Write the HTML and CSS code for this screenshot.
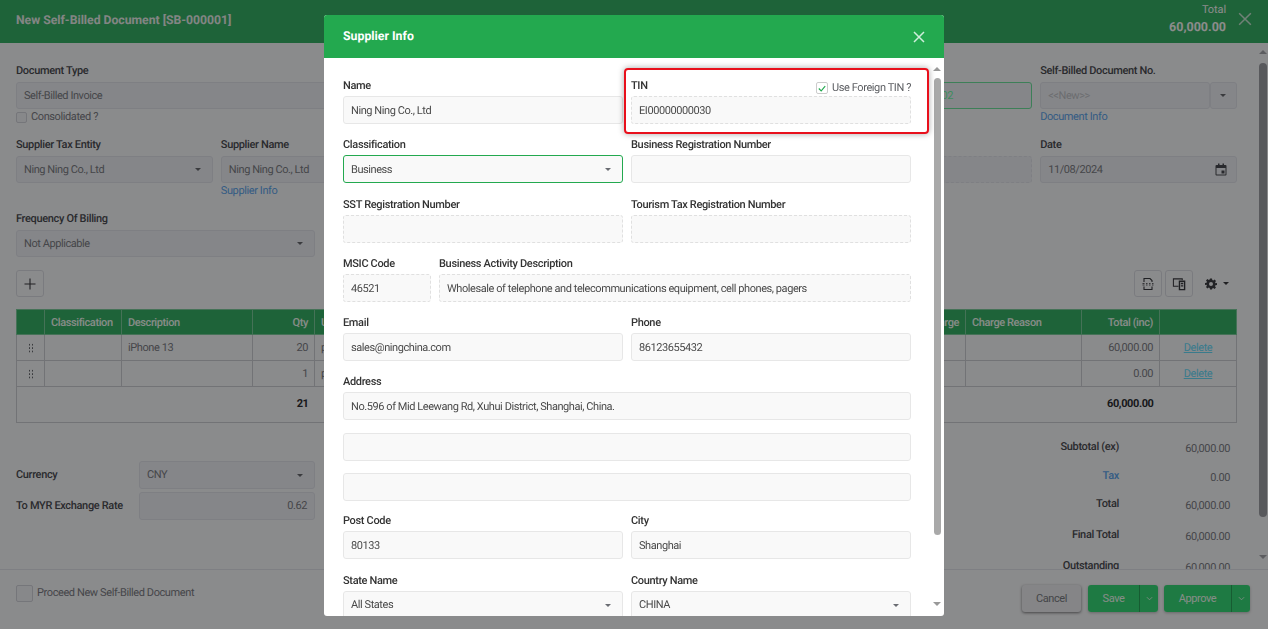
FILE: index.html
```html
<!DOCTYPE html>
<html lang="en">
<head>
<meta charset="utf-8">
<title>New Self-Billed Document</title>
<link rel="stylesheet" href="styles.css">
</head>
<body>
<div class="page">
  <header class="top">
    <h1>New Self-Billed Document [SB-000001]</h1>
    <div class="top-total"><span>Total</span><strong>60,000.00</strong></div>
    <svg class="top-x" viewBox="0 0 12 12"><path d="M1 1l10 10M11 1L1 11"/></svg>
  </header>
  <div class="middle">
    <main class="content">
      <div class="grid6">
        <div class="f s4"><label>Document Type</label><div class="inp">Self-Billed Invoice</div>
          <div class="chk-line"><i class="box"></i>Consolidated ?</div></div>
        <div class="f"><label>&nbsp;</label><div class="inp green">SB-2024-000000000002</div></div>
        <div class="f"><label>Self-Billed Document No.</label>
          <div class="combo"><div class="inp muted">&lt;&lt;New&gt;&gt;</div><div class="inp btn-c"><b class="caret"></b></div></div>
          <a class="link">Document Info</a></div>
      </div>
      <div class="grid6 r2">
        <div class="f"><label>Supplier Tax Entity</label><div class="inp sel">Ning Ning Co., Ltd<b class="caret"></b></div></div>
        <div class="f s2"><label>Supplier Name</label><div class="inp">Ning Ning Co., Ltd</div><a class="link">Supplier Info</a></div>
        <div class="f"></div>
        <div class="f"><label>&nbsp;</label><div class="inp dash"></div></div>
        <div class="f"><label>Date</label><div class="inp sel">11/08/2024
          <svg class="cal" viewBox="0 0 12 13"><path d="M1.500 2h9a1 1 0 0 1 1 1v8.500a1 1 0 0 1-1 1h-9a1 1 0 0 1-1-1V3a1 1 0 0 1 1-1zm0 3v6.500h9V5zM3 .5h1.500V2H3zm4.500 0H9V2H7.500zM6.500 7.500h3v3h-3z" fill-rule="evenodd"/></svg></div></div>
      </div>
      <div class="f freq"><label>Frequency Of Billing</label><div class="inp sel">Not Applicable<b class="caret"></b></div></div>
      <div class="tools">
        <button class="sq"><svg viewBox="0 0 12 12"><path d="M6 .5v11M.5 6h11"/></svg></button>
        <div class="tools-r">
          <button class="sq"><svg class="ic" viewBox="0 0 14 14"><path d="M3 5V1.500h6l2 2V5M3 9.500v3h8v-3" /><path class="thin" d="M1.500 6.500h2M1.500 8h2M5 6.500h1.500M5 8h1.500M8 6.500h1.500M8 8h1.500M11 6.500h1.500M11 8h1.500"/></svg></button>
          <button class="sq"><svg class="ic" viewBox="0 0 15 14"><path d="M11 3V1.500H1.500v8H7"/><path class="fill" d="M8 4h5.500v9H8zM9.500 6.500h2.500M9.500 9h2.500"/></svg></button>
          <span class="gear"><svg viewBox="0 0 24 24"><path fill-rule="evenodd" d="M10 1h4l.6 3.100 1.900.8 2.700-1.800 2.800 2.800-1.800 2.700.8 1.900L24 10v4l-3.100.6-.8 1.900 1.800 2.700-2.800 2.800-2.700-1.800-1.900.8L14 23h-4l-.6-3.100-1.900-.8-2.700 1.800L2 18.100l1.800-2.700-.8-1.900L0 14v-4l3.100-.6.8-1.900L2 4.900 4.800 2.100l2.700 1.800 1.900-.8zM12 8a4 4 0 1 0 0 8 4 4 0 0 0 0-8z"/></svg><b class="caret dark"></b></span>
        </div>
      </div>
      <table class="items">
        <colgroup><col class="c1"><col class="c2"><col class="c3"><col class="c4"><col><col class="c6"><col class="c7"><col class="c8"><col class="c9"></colgroup>
        <thead><tr><th></th><th>Classification</th><th>Description</th><th class="r">Qty</th><th>UOM</th><th class="r">Charge</th><th>Charge Reason</th><th class="r">Total (inc)</th><th></th></tr></thead>
        <tbody>
          <tr><td class="drag"><i class="dots"></i></td><td></td><td>iPhone 13</td><td class="r">20</td><td>pcs</td><td></td><td></td><td class="r">60,000.00</td><td class="c"><a class="del">Delete</a></td></tr>
          <tr><td class="drag"><i class="dots"></i></td><td></td><td></td><td class="r">1</td><td>pcs</td><td></td><td></td><td class="r">0.00</td><td class="c"><a class="del">Delete</a></td></tr>
          <tr class="sum"><td colspan="3"></td><td class="r">21</td><td colspan="3"></td><td class="r">60,000.00</td><td></td></tr>
        </tbody>
      </table>
      <div class="lower">
        <div class="cur">
          <div class="cur-row"><label>Currency</label><div class="inp sel">CNY<b class="caret"></b></div></div>
          <div class="cur-row"><label>To MYR Exchange Rate</label><div class="inp tr">0.62</div></div>
        </div>
        <div class="totals">
          <div class="t-row t1"><label>Subtotal (ex)</label><span>60,000.00</span></div>
          <div class="t-row t2"><label class="lnk">Tax</label><span>0.00</span></div>
          <div class="t-row t3"><label>Total</label><span>60,000.00</span></div>
          <div class="t-row t4"><label>Final Total</label><span>60,000.00</span></div>
          <div class="t-row t5"><label>Outstanding</label><span>60,000.00</span></div>
        </div>
      </div>
    </main>
    <div class="sbar outer"><b class="up"></b><i class="thumb"></i><b class="dn"></b></div>
  </div>
  <footer class="foot">
    <div class="foot-l"><i class="box big"></i>Proceed New Self-Billed Document</div>
    <div class="foot-r">
      <button class="cancel">Cancel</button>
      <div class="split s-save"><button>Save</button><button class="arr"><svg viewBox="0 0 8 5"><path d="M1 1l3 3 3-3"/></svg></button></div>
      <div class="split s-appr"><button>Approve</button><button class="arr"><svg viewBox="0 0 8 5"><path d="M1 1l3 3 3-3"/></svg></button></div>
    </div>
  </footer>
</div>

<div class="backdrop"></div>

<section class="modal">
  <div class="m-head"><h2>Supplier Info</h2><svg viewBox="0 0 12 12"><path d="M1 1l10 10M11 1L1 11"/></svg></div>
  <div class="m-body">
    <div class="m-form">
      <div class="mf"><label>Name</label><div class="inp">Ning Ning Co., Ltd</div></div>
      <div class="mf"><div class="lab-row"><label>TIN</label><span class="foreign"><i class="box on"><svg viewBox="0 0 10 8"><path d="M1 4l3 3 5-6"/></svg></i>Use Foreign TIN ?</span></div><div class="inp dash">EI00000000030</div></div>
      <div class="mf"><label>Classification</label><div class="inp sel focus">Business<b class="caret"></b></div></div>
      <div class="mf"><label>Business Registration Number</label><div class="inp"></div></div>
      <div class="mf"><label>SST Registration Number</label><div class="inp dash"></div></div>
      <div class="mf"><label>Tourism Tax Registration Number</label><div class="inp dash"></div></div>
      <div class="mf-row">
        <div class="mf msic"><label>MSIC Code</label><div class="inp dash">46521</div></div>
        <div class="mf bad"><label>Business Activity Description</label><div class="inp dash">Wholesale of telephone and telecommunications equipment, cell phones, pagers</div></div>
      </div>
      <div class="mf"><label>Email</label><div class="inp">sales@ningchina.com</div></div>
      <div class="mf"><label>Phone</label><div class="inp">86123655432</div></div>
      <div class="mf full"><label>Address</label><div class="inp">No.596 of Mid Leewang Rd, Xuhui District, Shanghai, China.</div><div class="inp"></div><div class="inp"></div></div>
      <div class="mf"><label>Post Code</label><div class="inp">80133</div></div>
      <div class="mf"><label>City</label><div class="inp">Shanghai</div></div>
      <div class="mf"><label>State Name</label><div class="inp sel">All States<b class="caret"></b></div></div>
      <div class="mf"><label>Country Name</label><div class="inp sel">CHINA<b class="caret"></b></div></div>
    </div>
    <div class="sbar inner"><b class="up"></b><i class="thumb"></i><b class="dn"></b></div>
  </div>
  <div class="hilite"></div>
</section>
</body>
</html>
```

FILE: styles.css
```css
* { box-sizing: border-box; }
html, body { margin: 0; height: 100%; overflow: hidden; }
body { font-family: Roboto, "Liberation Sans", sans-serif; font-size: 11px; letter-spacing: -.4px; color: #585a5f; background: #fcfdff; text-rendering: geometricPrecision; }
label { display: block; font-weight: 500; font-size: 11px; letter-spacing: -.34px; line-height: 14px; color: #4c4e53; }
button { font: inherit; letter-spacing: inherit; }

.page { height: 629px; display: flex; flex-direction: column; }
.top { height: 43px; flex: none; background: #38b468; display: flex; align-items: center; padding: 0 16px; color: #fff; }
.top h1 { margin: 0 0 4px; font-size: 12.2px; font-weight: 700; letter-spacing: 0; color: #eef3f0; flex: 1; }
.top-total { display: flex; flex-direction: column; align-items: flex-end; margin: 0 12px 3px 0; color: #fff; }
.top-total span { font-size: 11px; line-height: 14px; letter-spacing: -.1px; }
.top-total strong { font-size: 12.5px; line-height: 18px; margin-top: 2px; font-weight: 700; letter-spacing: 0; }
.top-x { width: 14px; height: 14px; margin-bottom: 5px; }
.top-x path { stroke: #fff; stroke-width: 1.3; fill: none; opacity: .75; }

.middle { flex: 1; min-height: 0; display: flex; }
.content { flex: 1; min-width: 0; padding: 21px 21px 0 16px; overflow: hidden; }
.grid6 { display: grid; grid-template-columns: repeat(6, 1fr); column-gap: 8px; }
.r2 { margin-top: 14px; }
.s2 { grid-column: span 2; }
.s4 { grid-column: span 4; }
.f label { margin-bottom: 4px; }
.inp { height: 27px; line-height: 25px; padding: 0 7px; border: 1px solid #e6e8ef; border-radius: 3px; background: #f3f5fa; color: #7e8087; white-space: nowrap; overflow: hidden; letter-spacing: -.43px; }
.sel { display: flex; justify-content: space-between; align-items: center; padding-right: 11px; }
.caret { display: inline-block; width: 0; height: 0; border: 3px solid transparent; border-top: 3.500px solid #6a6c72; border-bottom: 0; flex: none; }
.caret.dark { border-top-color: #3a3b3f; }
.green { border-color: #70e8a0; color: #70ffaa; }
.dash { border-style: dashed; }
.muted { color: #c4c6cc; flex: 1; }
.combo { display: flex; }
.btn-c { width: 27px; display: flex; align-items: center; justify-content: center; padding: 0; flex: none; }
.link { display: block; color: #5fa8f0; line-height: 14px; margin-top: 1px; }
.chk-line { display: flex; align-items: center; gap: 4px; margin-top: 2px; line-height: 12px; color: #7e8087; }
.box { display: inline-block; width: 11px; height: 11px; border: 1px solid #d5d7de; border-radius: 2px; background: #f6f7fb; flex: none; }
.cal { width: 12px; height: 13px; fill: #4a4c52; margin-right: -2px; }
.freq { width: 299px; margin-top: 14px; }
.tools { display: flex; justify-content: space-between; align-items: center; margin-top: 13px; }
.sq { width: 28px; height: 27px; padding: 0; border: 1px solid #dfe1e8; border-radius: 3px; background: transparent; display: flex; align-items: center; justify-content: center; }
.sq svg { width: 12px; height: 12px; }
.sq svg path { stroke: #3a3b40; stroke-width: 1.100; fill: none; }
.sq svg.ic { width: 14px; height: 14px; }
.sq svg path.thin { stroke-width: .800; }
.sq svg path.fill { fill: none; stroke-width: 1.500; }
.tools-r { display: flex; align-items: center; gap: 3px; }
.gear { display: flex; align-items: center; gap: 6px; width: 41px; padding-left: 9px; }
.gear svg { width: 12px; height: 12px; fill: #3f4045; flex: none; }

.items { width: 100%; table-layout: fixed; border-collapse: collapse; margin-top: 12px; }
.c1 { width: 28px; } .c2 { width: 77px; } .c3 { width: 131px; } .c4 { width: 62px; }
.c6 { width: 60px; } .c7 { width: 116px; } .c8 { width: 78px; } .c9 { width: 77px; }
.items th { height: 25px; background: #38b468; color: #f6fff8; font-weight: 500; text-align: left; padding: 0 6px; border: 1px solid #7fd09e; white-space: nowrap; overflow: hidden; }
.items td { height: 26px; padding: 0 6px; border: 1px solid #d0d2d8; color: #7e8087; white-space: nowrap; overflow: hidden; }
.items .r { text-align: right; }
.items .c { text-align: center; }
.items .drag { padding: 0; text-align: center; }
.dots { display: inline-block; width: 6px; height: 10px; vertical-align: middle; background-image: radial-gradient(circle, #6a6c72 .8px, transparent 1px); background-size: 3px 3.400px; }
.del { color: #69e0ff; text-decoration: underline; }
.items .sum td { height: 36px; padding-bottom: 2px; font-weight: 700; color: #2e2f33; border-left: 0; border-right: 0; }
.items .sum td:first-child { border-left: 1px solid #d0d2d8; }
.items .sum td:last-child { border-right: 1px solid #d0d2d8; }
.lower { display: flex; justify-content: space-between; }
.cur { width: 299px; margin-top: 38px; display: flex; flex-direction: column; gap: 3px; }
.cur-row { display: flex; align-items: center; }
.cur-row label { width: 123px; flex: none; }
.cur-row .inp { flex: 1; height: 28px; line-height: 26px; }
.tr { text-align: right; }
.totals { width: 172px; margin: 17px 7px 0 0; }
.t-row { display: flex; justify-content: space-between; align-items: center; height: 14px; }
.t-row label { width: 61px; white-space: nowrap; direction: rtl; }
.t-row span { color: #7e8087; padding-top: 2px; }
.t-row .lnk { color: #5fa8f0; }
.t2 { margin-top: 15px; } .t3 { margin-top: 14px; } .t4 { margin-top: 17px; } .t5 { margin-top: 17px; }

.sbar { flex: none; display: flex; flex-direction: column; align-items: center; }
.sbar .up { width: 0; height: 0; border: 4px solid transparent; border-bottom: 4px solid #a8aab0; border-top: 0; }
.sbar .dn { width: 0; height: 0; border: 4px solid transparent; border-top: 4px solid #a8aab0; border-bottom: 0; }
.sbar .thumb { display: block; border-radius: 4px; }
.outer { width: 10px; padding-top: 7px; }
.outer .thumb { width: 8px; height: 454px; margin: 9px 0 38px; background: #a0a2a8; }

.foot { height: 60px; flex: none; border-top: 1px solid #e6e8ee; display: flex; justify-content: space-between; padding: 15px 18px 0 16px; }
.foot-l { display: flex; align-items: flex-start; gap: 4px; color: #7e8087; line-height: 16px; }
.box.big { width: 17px; height: 17px; }
.foot-r { display: flex; gap: 7px; align-items: flex-start; height: 27px; }
.foot-r button { border: 0; height: 27px; padding: 0; }
.foot-r .cancel { width: 59px; background: #f2f3f6; color: #7c7e84; border-radius: 3px; box-shadow: 0 1px 3px rgba(0,0,0,.5); }
.split { display: flex; border-radius: 3px; overflow: hidden; box-shadow: 0 1px 3px rgba(0,0,0,.25); }
.foot-r .split button { background: #37df7a; color: #f5fff8; }
.foot-r .split .arr { width: 19px; border-left: 1px solid #2aa85c; display: flex; align-items: center; justify-content: center; }
.arr svg { width: 7px; height: 5px; }
.arr path { stroke: #e8fff0; fill: none; stroke-width: 1; }
.s-save button:first-child { width: 51px; }
.s-appr button:first-child { width: 67px; }
.s-appr { margin-left: -1px; }

.backdrop { position: fixed; inset: 0; background: rgba(0,0,0,.45); }
.modal { position: absolute; left: 324px; top: 15px; width: 620px; height: 601px; background: #fff; border-radius: 3px; overflow: hidden; display: flex; flex-direction: column; }
.m-head { height: 43px; flex: none; background: #23a94f; display: flex; align-items: center; justify-content: space-between; padding: 0 19px; }
.m-head h2 { margin: 0; font-size: 12.300px; font-weight: 700; letter-spacing: 0; color: #fff; }
.m-head svg { width: 12px; height: 12px; }
.m-head path { stroke: #cfeedb; stroke-width: 1.500; fill: none; }
.m-body { flex: 1; min-height: 0; display: flex; padding-left: 19px; overflow: hidden; }
.m-form { width: 568px; flex: none; display: grid; grid-template-columns: 280px 280px; column-gap: 8px; align-content: start; padding-top: 20px; }
.mf { margin-bottom: 13.300px; min-width: 0; }
.mf label { color: #333; margin-bottom: 4px; padding-top: 1px; line-height: 13px; }
.mf .inp { height: 28px; line-height: 28px; background: #f9f9f9; border-color: #e7e7e7; color: #4a4a4a; }
.mf .sel { padding-top: 1px; }
.mf .dash { border-color: #e0e0e0; }
.mf-row { grid-column: 1 / -1; display: flex; gap: 8px; }
.msic { width: 88px; flex: none; }
.bad { flex: 1; }
.full { grid-column: 1 / -1; margin-bottom: 12px; }
.full .inp + .inp { margin-top: 12.500px; }
.mf .focus { border-color: #23a94f; }
.lab-row { display: flex; justify-content: space-between; height: 18px; }
.foreign { display: flex; align-items: center; gap: 4px; line-height: 12px; color: #5c5e62; height: 14px; margin-top: 3px; }
.box.on { width: 12px; height: 12px; background: #fff; border-color: #ccc; display: flex; align-items: center; justify-content: center; }
.box.on svg { width: 8px; height: 7px; }
.box.on path { stroke: #23a94f; stroke-width: 1.400; fill: none; }
.inner { width: 12px; margin-left: 20px; padding-top: 9px; }
.inner .thumb { width: 7px; height: 457px; margin: 7px 0 67px; background: #a9a9a9; }
.inner .up, .inner .dn { border-bottom-color: #999; border-top-color: #999; }
.hilite { position: absolute; left: 300px; top: 53px; width: 305px; height: 66px; border: 2px solid #e8101c; border-radius: 4px; box-shadow: 0 0 6px rgba(0,0,0,.35); }
```
